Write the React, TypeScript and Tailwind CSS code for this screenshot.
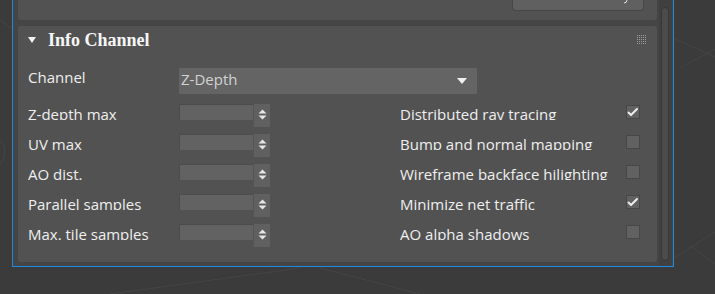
import React from "react";

const leftRows = ["Z-depth max", "UV max", "AO dist.", "Parallel samples", "Max. tile samples"];
const rightRows: [string, boolean][] = [
  ["Distributed ray tracing", true],
  ["Bump and normal mapping", false],
  ["Wireframe backface hilighting", false],
  ["Minimize net traffic", true],
  ["AO alpha shadows", false],
];

function Spinner() {
  return (
    <div className="flex items-start">
      <div className="w-[74px] h-[16px] bg-[#626262] border-t border-l border-[#4c4c4c]" />
      <div className="w-[17px] h-[23px] bg-[#606060] border-l border-[#555555] flex items-start justify-center pt-[5px]">
        <svg width="9" height="11" viewBox="0 0 9 11">
          <polygon points="0.5,4.5 4.5,0.5 8.5,4.5" fill="#e6e6e6" />
          <polygon points="0.5,6.5 8.5,6.5 4.5,10.5" fill="#e6e6e6" />
        </svg>
      </div>
    </div>
  );
}

function Checkbox({ checked }: { checked: boolean }) {
  return (
    <div className="w-[14px] h-[14px] mt-[1px] bg-[#616161] border border-[#474747] flex items-center justify-center">
      {checked && (
        <svg width="12" height="12" viewBox="0 0 12 12">
          <path d="M1.5 6.5 L4 9 L10 3" stroke="#ececec" strokeWidth="2" fill="none" strokeLinecap="round" strokeLinejoin="round" />
        </svg>
      )}
    </div>
  );
}

export default function App() {
  return (
    <div className="relative w-[715px] h-[294px] overflow-hidden bg-[#3b3b3b] font-['Open_Sans',sans-serif]">
      <svg className="absolute inset-0" width="715" height="294">
        <g stroke="#454545" strokeWidth="1" fill="none">
          <line x1="660" y1="32" x2="715" y2="57" />
          <line x1="680" y1="68" x2="715" y2="49" />
          <line x1="668" y1="262" x2="715" y2="232" />
          <line x1="690" y1="246" x2="715" y2="264" />
          <line x1="110" y1="294" x2="300" y2="268" />
          <line x1="320" y1="268" x2="420" y2="294" />
          <line x1="0" y1="20" x2="14" y2="30" />
          <path d="M0 140 Q10 150 0 165" />
        </g>
      </svg>
      <div className="relative ml-[12px] w-[662px] h-[267px] border border-t-0 border-[#1e8ae6] bg-[#454545] flex">
        <div className="pl-[5px] flex flex-col">
          <div className="w-[639px] h-[20px] bg-[#525252] rounded-b-[3px] flex justify-end pr-[13px]">
            <div className="relative w-[132px] h-[11px] bg-[#606060] rounded-b-[4px] border border-t-0 border-[#474747]">
              <svg className="absolute right-[14px] top-0" width="6" height="4" viewBox="0 0 6 4">
                <path d="M4 0 Q4 3 1 3" stroke="#e0e0e0" strokeWidth="1" fill="none" />
              </svg>
            </div>
          </div>
          <div className="mt-[6px] w-[639px] h-[236px] bg-[#525252] rounded-[3px] pl-[10px] text-[#efefef]">
            <div className="flex items-start pt-[4px] h-[24px]">
              <svg className="mt-[7px]" width="8" height="6" viewBox="0 0 8 6">
                <polygon points="0,0 8,0 4,6" fill="#f2f2f2" />
              </svg>
              <span className="ml-[12px] font-['Liberation_Serif',serif] font-bold text-[18px] leading-[20px] text-[#f6f6f6]">
                Info Channel
              </span>
              <div className="ml-auto mr-[11px] mt-[5px] grid grid-cols-5 gap-[1px] w-[9px]">
                {Array.from({ length: 25 }).map((_, i) => (
                  <div key={i} className="w-[1px] h-[1px] bg-[#9c9c9c]" />
                ))}
              </div>
            </div>
            <div className="mt-[18px] flex items-start h-[26px]">
              <div className="w-[151px] -mt-[1px] text-[15px] leading-[20px]">Channel</div>
              <div className="w-[298px] h-[26px] bg-[#646464] flex items-start justify-between pl-[2px] pr-[10px]">
                <span className="pt-[1px] text-[15px] leading-[20px] text-[#d2d2d2]">Z-Depth</span>
                <svg className="mt-[10px]" width="10" height="6" viewBox="0 0 10 6">
                  <polygon points="0,0 10,0 5,6" fill="#f0f0f0" />
                </svg>
              </div>
            </div>
            <div className="mt-[10px] grid grid-cols-[151px_91px_130px_226px_14px]">
              {leftRows.map((label, i) => (
                <React.Fragment key={label}>
                  <div className="h-[30px]">
                    <div className="h-[16px] overflow-hidden text-[15px] leading-[20px] whitespace-nowrap">{label}</div>
                  </div>
                  <div className="h-[30px]">
                    <Spinner />
                  </div>
                  <div />
                  <div className="h-[30px]">
                    <div className="h-[16px] overflow-hidden text-[15px] leading-[20px] whitespace-nowrap">{rightRows[i][0]}</div>
                  </div>
                  <div className="h-[30px]">
                    <Checkbox checked={rightRows[i][1]} />
                  </div>
                </React.Fragment>
              ))}
            </div>
          </div>
        </div>
        <div className="ml-[2px] w-[13px] h-[266px] bg-[#404040] flex flex-col">
          <div className="ml-[2px] mt-[7px] w-[8px] h-[254px] rounded-full bg-[#4b4b4b] border border-[#383838]" />
        </div>
      </div>
    </div>
  );
}
